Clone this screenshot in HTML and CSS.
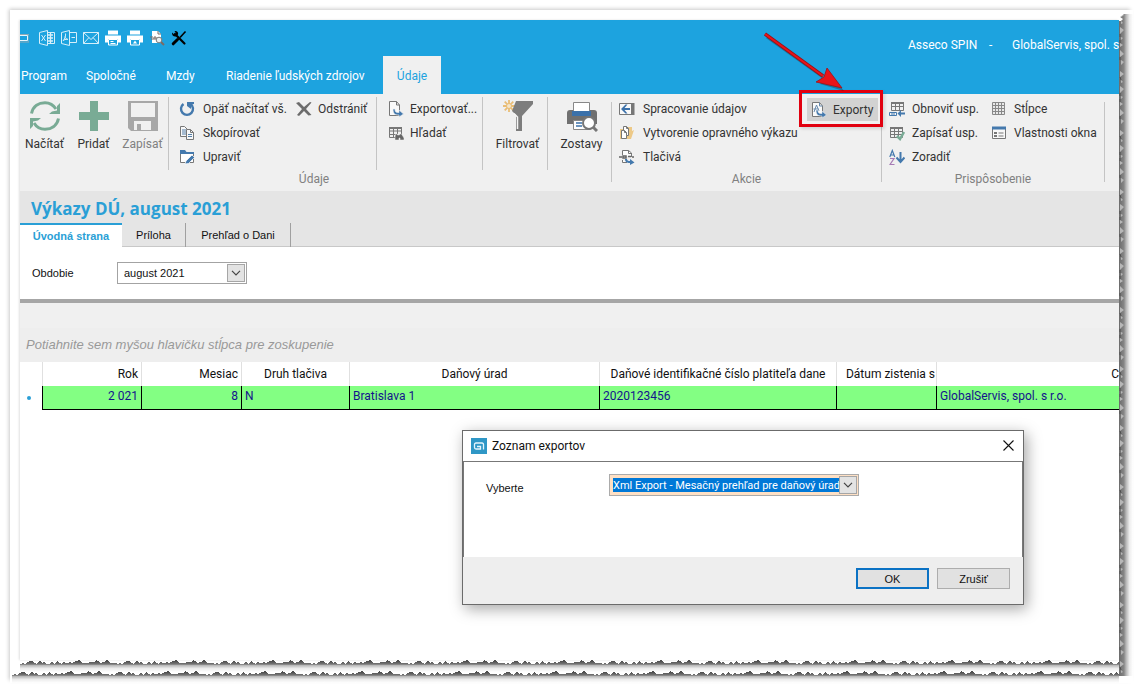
FILE: index.html
```html
<!DOCTYPE html>
<html lang="sk">
<head>
<meta charset="utf-8">
<title>Asseco SPIN</title>
<link rel="stylesheet" href="styles.css">
</head>
<body>
<div class="sheet">
  <div class="app">
    <header class="titlebar">
      <div class="quick">
        <svg class="cut-logo" width="9" height="16" viewBox="0 0 9 16"><path d="M0 4.500h9v7.500H0" fill="none" stroke="#8fa9b5" stroke-width="1"/><path d="M0 5.500h7.500v5H0" fill="none" stroke="#e8f6fc" stroke-width="1"/></svg>
        <button aria-label="Excel"><svg width="16" height="16" viewBox="0 0 16 16" fill="none" stroke="#d6effa"><path d="M.5 2.500l8-2v15l-8-2zM8.500 2.500h7v11h-7M2.500 5l4 6M6.500 5l-4 6"/><path d="M9 5h5M9 8h5M9 11h5M11.500 3v10" stroke-width="1.300"/></svg></button>
        <button aria-label="PDF"><svg width="16" height="16" viewBox="0 0 16 16" fill="none" stroke="#d6effa"><path d="M.5 2.500l8-2v15l-8-2zM8.500 2.500h7v10h-7M2 11c2-2 3-6 2.500-7.500M4 6.500c.5 2 1.500 3 3 3M2.500 10l4-1M10.500 7.500h3.500"/></svg></button>
        <button aria-label="Mail"><svg width="16" height="16" viewBox="0 0 16 16" fill="none" stroke="#d6effa"><path d="M.5 2.500h15v11H.5zM.5 2.500l7.500 7 7.500-7M.5 13.500l5.500-6M15.500 13.500l-5.500-6"/></svg></button>
        <button aria-label="Tlač"><svg width="16" height="16" viewBox="0 0 16 16"><path d="M3 .5h10v4H3zM0 5.500h16v7h-3V9H3v3.500H0z" fill="#fff"/><path d="M3.500 9.500h9v5.500h-9z" fill="#1da3df" stroke="#fff"/><path d="M5.500 11.500h3M5.500 13.500h5" stroke="#fff"/></svg></button>
        <button aria-label="Náhľad tlače"><svg width="16" height="16" viewBox="0 0 16 16"><path d="M3 .5h10v4H3zM0 5.500h16v7h-3V9H3v3.500H0z" fill="#fff"/><path d="M3.500 9.500h9v5.500h-9z" fill="#1da3df" stroke="#fff"/><path d="M8 10.500l2 3H6z" fill="#fff"/></svg></button>
        <button aria-label="Nájsť"><svg width="16" height="16" viewBox="0 0 16 16"><path d="M3 1h6l3 3v9H3z" fill="#fff"/><path d="M9 1v3h3M1 7h3M2 9h3M5 7h2v2H5z" fill="none" stroke="#7b6b65"/><circle cx="10" cy="10" r="2.800" fill="#e9eef0" stroke="#7b7b7b"/><path d="M12 12l3 3" stroke="#7b6b65" stroke-width="2"/></svg></button>
        <button aria-label="Nástroje"><svg width="16" height="16" viewBox="0 0 16 16"><path d="M4 4l9.500 9.500" stroke="#000" stroke-width="2.200" stroke-linecap="round"/><path d="M1 2.500l2.200 2L5 3.500 3.500 1c2.500-.5 4.200 1.500 3.500 3.500L5 6.500C2.500 7 .7 5 1 2.500z" fill="#000"/><path d="M14.500 1.500L9 7.500" stroke="#000" stroke-width="1.600"/><path d="M6.500 9.500l-4.300 4.300" stroke="#000" stroke-width="3" stroke-linecap="round"/></svg></button>
      </div>
      <div class="caption"><span class="product">Asseco SPIN</span><span class="dash">-</span><span class="firm">GlobalServis, spol. s</span></div>
    </header>
    <nav class="menu">
      <a href="#" class="m-program">Program</a><a href="#" class="m-common">Spoločné</a><a href="#" class="m-wages">Mzdy</a><a href="#" class="m-hr">Riadenie ľudských zdrojov</a><a href="#" class="active">Údaje</a>
    </nav>

    <section class="ribbon">
      <div class="group data">
        <div class="tools">
          <div class="bigs">
            <button class="big"><svg width="32" height="32" viewBox="0 0 32 32"><g fill="none" stroke="#79ab95" stroke-width="3"><path d="M2.500 13.500C4 6 10 2.700 16 2.700c4.500 0 8.500 2.300 11 6.300"/><path d="M29.500 18.500c-1.500 7.500-7.500 10.800-13.500 10.800-4.500 0-8.500-2.300-11-6.300"/></g><path d="M31 3v11H20l3-2.500 5-1V6zM1 29V18h11l-3 2.500-5 1V26z" fill="#79ab95"/></svg><span>Načítať</span></button>
            <button class="big"><svg width="32" height="32" viewBox="0 0 32 32"><path d="M12 1h8v11h11v8H20v11h-8V20H1v-8h11z" fill="#79ab95"/></svg><span>Pridať</span></button>
            <button class="big off"><svg width="32" height="32" viewBox="0 0 32 32"><path d="M1 1h30v30H4l-3-3z" fill="#a7a7a7"/><path d="M4 3h24v14H4zM7 21h17v9H7z" fill="#f0f0f0"/><path d="M10 24h4v6h-4z" fill="#a7a7a7"/></svg><span>Zapísať</span></button>
          </div>
          <div class="edit">
            <button class="cmd"><svg width="16" height="16" viewBox="0 0 16 16"><path d="M4.500 3A6 6 0 1 0 11.500 3" fill="none" stroke="#4479ad" stroke-width="2.400"/><path d="M8 1h7v2l-2.500.5L12 8 8 5z" fill="#4479ad"/></svg>Opäť načítať vš.</button>
            <button class="cmd"><svg width="16" height="16" viewBox="0 0 16 16" fill="#f8f8f8" stroke="#777"><path d="M1.500 1.500h4l3 3v7h-7z"/><path d="M3 5h4M3 7h4M3 9h4" stroke="#557fa8"/><path d="M7.500 4.500h4l3 3v7h-7z"/><path d="M11.500 4.500v3h3" fill="none"/><path d="M9 9.500h4M9 11.500h4" stroke="#557fa8"/></svg>Skopírovať</button>
            <button class="cmd"><svg width="16" height="16" viewBox="0 0 16 16"><path d="M1.500 3.500h13v10h-13z" fill="#fff" stroke="#777"/><path d="M1 1h5l1.500 2H15v2H1z" fill="#4479ad"/><path d="M6 15l1-3 6-6 2.500 2.500-6 6z" fill="#4479ad" stroke="#fff" stroke-width=".7"/></svg>Upraviť</button>
          </div>
          <div class="remove">
            <button class="cmd"><svg width="16" height="16" viewBox="0 0 16 16"><path d="M0 2l3-1 5 5 6-5 1.500.5L10 8l5.500 6-3 .5L8 10l-5 5-2-1 5-6z" fill="#6c6c6c"/></svg>Odstrániť</button>
          </div>
          <div class="share">
            <button class="cmd"><svg width="16" height="16" viewBox="0 0 16 16"><path d="M1.500.5h7l3 3.500v10.500h-10z" fill="#fafafa" stroke="#777"/><path d="M8.500.5V4h3" fill="none" stroke="#777"/><path d="M5 8h2c0 3 1 3.500 4 3.500V9l4.500 4-4.500 3v-2C7 14 5 13 5 8z" fill="#4479ad" stroke="#f0f0f0" stroke-width=".6"/></svg>Exportovať...</button>
            <button class="cmd"><svg width="16" height="16" viewBox="0 0 16 16"><path d="M1.500 2.500h12v10h-12zM1 6h12M1 9.500h7M5.500 3v9M9.500 3v6" fill="none" stroke="#777"/><path d="M1 2h13v2H1z" fill="#777"/><path d="M7.500 9h2v1h2V9h2L16 13v2h-4v-2h-1v2H7v-3z" fill="#666" stroke="#f0f0f0" stroke-width=".5"/></svg>Hľadať</button>
          </div>
          <div class="filter">
            <button class="big"><svg width="32" height="32" viewBox="0 0 32 32"><path d="M7 0v12M1 6h12M2.700 1.700l8.600 8.600M11.300 1.700l-8.600 8.600" stroke="#e9bd75" stroke-width="1.800"/><circle cx="7" cy="6" r="2.500" fill="#f5e6ca" stroke="#e9bd75"/><path d="M14 1h17v3l-11 12v15h-6V15l-4-4z" fill="#7d7d7d"/><path d="M12 13.500l3.500 3.500v12" fill="none" stroke="#f5f5f5" stroke-width="1.500"/></svg><span>Filtrovať</span></button>
          </div>
          <div class="reports">
            <button class="big"><svg width="32" height="32" viewBox="0 0 32 32"><path d="M1 13q0-3 3-3h24q3 0 3 3v11H1z" fill="#707070"/><path d="M7.500 2.500h16V14h-16z" fill="#fff" stroke="#888"/><path d="M6 11h19v5H6z" fill="#3b71aa"/><path d="M7.500 20.500h17v9h-17z" fill="#fff" stroke="#888"/><path d="M10 23h6M10 26h6" stroke="#3b71aa" stroke-width="1.400"/><circle cx="23" cy="23" r="6" fill="#fff" stroke="#777" stroke-width="2"/><path d="M27 27l4 4" stroke="#777" stroke-width="3"/></svg><span>Zostavy</span></button>
          </div>
        </div>
        <div class="label">Údaje</div>
      </div>
      <div class="group actions">
        <div class="tools">
          <div class="process">
            <button class="cmd"><svg width="16" height="16" viewBox="0 0 16 16"><path d="M.5 2.500h14v11H.5z" fill="#f9f9f9" stroke="#777"/><path d="M12 2h3.500v12H12z" fill="#777"/><path d="M2 8l4.500-4.500h2L5.500 7H11v2H5.500l3 3.500h-2z" fill="#3b71aa"/></svg>Spracovanie údajov</button>
            <button class="cmd"><svg width="16" height="16" viewBox="0 0 16 16"><path d="M1 4h6l1-2h5v4l2-1-3 9H1z" fill="#edc987"/><path d="M4.500 1.500h3l2 2v7h-2v3h-5v-8h2z" fill="#fff" stroke="#777"/><path d="M4.500 5.500h1l2 2v3M7.500 1.500v2h2M5.500 5.500v2h2" fill="none" stroke="#777"/></svg>Vytvorenie opravného výkazu</button>
            <button class="cmd"><svg width="16" height="16" viewBox="0 0 16 16"><path d="M3.500 6V1.500h6L12.500 4v4M3.500 11v2.500H8" fill="#fff" stroke="#777"/><path d="M9.500 1.500v3h3" fill="none" stroke="#777"/><path d="M0 8h3M4 9V7h3v2zM9 7.500h3M13 8h2" fill="none" stroke="#666" stroke-width="1.500"/><path d="M6 10h2c0 1.500 1 2 3 2v-2l4.500 3.500L11 16v-2c-3 0-5-1-5-4z" fill="#4479ad"/></svg>Tlačivá</button>
          </div>
          <div class="exports">
            <button class="cmd pressed"><svg width="16" height="16" viewBox="0 0 16 16"><path d="M1.500.5h7l3 3.500v10.500h-10z" fill="#fafafa" stroke="#777"/><path d="M8.500.5V4h3M3 10L5.500 3 8 9M2.500 7h5" fill="none" stroke="#6689ad"/><path d="M5 8h2c0 3 1 3.500 4 3.500V9l4.500 4-4.500 3v-2C7 14 5 13 5 8z" fill="#4479ad" stroke="#f0f0f0" stroke-width=".6"/></svg>Exporty</button>
          </div>
        </div>
        <div class="label">Akcie</div>
      </div>
      <div class="group custom">
        <div class="tools">
          <div class="layout">
            <button class="cmd"><svg width="16" height="16" viewBox="0 0 16 16"><path d="M2 1h13v2H2z" fill="#777"/><path d="M2.500 1.500v8h12v-8M2 5.500h13M6.500 2v7M10.500 2v7" fill="none" stroke="#777"/><path d="M.5 11.500h7v3h-7zM2 13h4" fill="#f4f4f4" stroke="#4479ad"/><path d="M8.500 12.500L12 9v2.500h4v2h-4V16z" fill="#4479ad"/></svg>Obnoviť usp.</button>
            <button class="cmd"><svg width="16" height="16" viewBox="0 0 16 16"><path d="M1 2h13v2H1z" fill="#777"/><path d="M1.500 2.500v10h12v-10M1 6.500h13M1 9.500h13M5.500 3v9M9.500 3v9" fill="none" stroke="#777"/><path d="M8 11l3 3 4-7" fill="none" stroke="#79ab95" stroke-width="2.500"/></svg>Zapísať usp.</button>
            <button class="cmd"><svg width="16" height="16" viewBox="0 0 16 16"><path d="M.8 8L3.300 1.500 5.800 8M2 6h3" fill="none" stroke="#4479ad" stroke-width="1.200"/><path d="M1 9.500h4l-4 6h4.500" fill="none" stroke="#a77bb5" stroke-width="1.200"/><path d="M11.500 3v9M7.500 8.500l4 4.500 4-4.500" fill="none" stroke="#4479ad" stroke-width="2"/></svg>Zoradiť</button>
          </div>
          <div class="window">
            <button class="cmd"><svg width="16" height="16" viewBox="0 0 16 16"><path d="M1.500 1.500h12v12h-12z" fill="#e8e8e8"/><path d="M1.500 1.500h12v12h-12zM1 4.500h13M1 7.500h13M1 10.500h13M4.500 1v13M7.500 1v13M10.500 1v13" fill="none" stroke="#888"/></svg>Stĺpce</button>
            <button class="cmd"><svg width="16" height="16" viewBox="0 0 16 16"><path d="M1.500 2.500h13v11h-13z" fill="#f8f8f8" stroke="#777"/><path d="M1 1.500h14v3H1z" fill="#4479ad"/><path d="M3 7h3v2H3zM3 10h3v2H3z" fill="#777"/><path d="M7.500 8h5M7.500 11h5" stroke="#777"/></svg>Vlastnosti okna</button>
          </div>
        </div>
        <div class="label">Prispôsobenie</div>
      </div>
    </section>

    <main class="page">
      <div class="heading">
        <h1>Výkazy DÚ, august 2021</h1>
        <div class="tabs"><button class="current">Úvodná strana</button><button class="tab-two">Príloha</button><button class="tab-three">Prehľad o Dani</button></div>
      </div>
      <div class="period">
        <label for="period">Obdobie</label>
        <div class="combo">
          <select id="period"><option>august 2021</option></select>
          <span class="drop"><svg width="10" height="6" viewBox="0 0 10 6"><path d="M1 .8l4 4 4-4" fill="none" stroke="#444" stroke-width="1.200"/></svg></span>
        </div>
      </div>
      <div class="strip"></div>
      <div class="grouping">Potiahnite sem myšou hlavičku stĺpca pre zoskupenie</div>
      <div class="grid">
        <table>
          <colgroup><col class="c-mark"><col class="c-year"><col class="c-100"><col class="c-kind"><col class="c-office"><col class="c-tax"><col class="c-100"><col></colgroup>
          <thead><tr><th></th><th class="num">Rok</th><th class="num">Mesiac</th><th>Druh tlačiva</th><th>Daňový úrad</th><th>Daňové identifikačné číslo platiteľa dane</th><th class="cut">Dátum zistenia s</th><th class="edge">C</th></tr></thead>
          <tbody><tr><td class="mark"><i class="dot"></i></td><td class="num">2 021</td><td class="num">8</td><td>N</td><td>Bratislava 1</td><td>2020123456</td><td></td><td>GlobalServis, spol. s r.o.</td></tr></tbody>
        </table>
      </div>
    </main>
  </div>

  <svg class="torn-side" width="14" height="100%">
    <defs>
      <linearGradient id="sideShade"><stop offset="0" stop-color="#6c6c6c"/><stop offset=".35" stop-color="#858585"/><stop offset=".5" stop-color="#b5b5b5"/><stop offset=".75" stop-color="#ededed"/><stop offset="1" stop-color="#fff"/></linearGradient>
      <pattern id="side" width="14" height="59" patternUnits="userSpaceOnUse"><path d="M0 0h14v59H0z" fill="url(#sideShade)"/><path d="M1 2l4 3-4 3zM2 11l2 2-2 1zM1 17l4 3-4 4zM2 27l2 1-2 2zM1 33l3 2-3 2zM1 40l4 4-4 3zM2 50l3 2-3 3z" fill="#b7b7b7"/><path d="M1 8l1 3M1 24v3M1 30v3M1 47v3" stroke="#505050" fill="none"/></pattern>
    </defs>
    <rect x="0" y="4" width="14" height="100%" fill="url(#side)"/><path d="M0 0h4l-1 2 2 2-4 3 3 2-2 2H0z" fill="#fff"/>
  </svg>
  <svg class="torn inner" width="100%" height="12">
    <defs>
      <linearGradient id="tearShade" x1="0" y1="0" x2="0" y2="12" gradientUnits="userSpaceOnUse"><stop offset=".1" stop-color="#4d4d4d"/><stop offset=".35" stop-color="#777"/><stop offset=".45" stop-color="#b9b9b9"/><stop offset=".7" stop-color="#ececec"/><stop offset="1" stop-color="#fff"/></linearGradient>
      <pattern id="tear" width="97" height="12" patternUnits="userSpaceOnUse"><path shape-rendering="crispEdges" d="M0 4l3-1 2 1 3-2 2-1 3 0 1 2 3 1 1-2 2-1 2 2 2-1 2 2 3 0 2-2 2 0 1 2 2-1 1-2 3 2 1 1 3-2 1 1 3 0 2-1 1 1 3-1 2-1 3-1 2 2 2 1 5 0 2-1 4 0 2-2 2 1 2 2 3-1 2 0 1-2 2 0 1 2 2 1 6 0V12H0z" fill="url(#tearShade)"/></pattern>
    </defs>
    <rect width="100%" height="12" fill="url(#tear)"/>
  </svg>
  <svg class="torn outer" width="100%" height="12"><rect width="100%" height="12" fill="url(#tear)"/></svg>

  <section class="dialog" role="dialog" aria-labelledby="dlg">
    <header><svg width="16" height="16" viewBox="0 0 16 16"><path d="M0 0h16v16H0z" fill="#2f97c6"/><path d="M12.500 11.500v-5q0-1.500-1.500-1.500H5Q3.500 5 3.500 6.500v3Q3.500 11 5 11h4.500V8.500H6" fill="none" stroke="#e6f5fc" stroke-width="1.300"/></svg><h2 id="dlg">Zoznam exportov</h2><button aria-label="Zavrieť"><svg width="11" height="11" viewBox="0 0 11 11"><path d="M.5.5l10 10M10.500.5l-10 10" stroke="#111" stroke-width="1.100"/></svg></button></header>
    <div class="form">
      <label for="export">Vyberte</label>
      <div class="combo picked">
        <select id="export"><option>Xml Export - Mesačný prehľad pre daňový úrad</option></select>
        <span class="drop"><svg width="10" height="6" viewBox="0 0 10 6"><path d="M1 .8l4 4 4-4" fill="none" stroke="#444" stroke-width="1.200"/></svg></span>
      </div>
    </div>
    <footer><button class="ok">OK</button><button>Zrušiť</button></footer>
  </section>

  <div class="callout"></div>
  <svg class="arrow" width="84" height="64" viewBox="0 0 84 64"><g transform="translate(2 3)" opacity=".25"><path d="M3 4l56 40" stroke="#000" stroke-width="3"/><path d="M80 58L56 51l6-5 3-7z"/></g><path d="M3 4l58 42" stroke="#9a1015" stroke-width="3.500"/><path d="M3 4l58 42" stroke="#e8141a" stroke-width="2"/><path d="M80 58L54 52l8-5 3-9z" fill="#e8141a" stroke="#a01015" stroke-width=".8"/></svg>
</div>
</body>
</html>
```

FILE: styles.css
```css
* { box-sizing: border-box; }
body { margin: 0; background: #fff; color: #111; font: 12px/16px Roboto, "Open Sans", sans-serif; }
button { font: inherit; color: inherit; background: none; border: 0; padding: 0; white-space: nowrap; }
svg { display: block; flex: none; }
h1, h2 { margin: 0; }
a { color: inherit; text-decoration: none; }

.sheet { position: relative; margin: 10px 8px 10px 10px; padding: 10px 0 0 10px; min-height: calc(100vh - 20px); display: grid; grid-template-columns: minmax(0, 1fr) 14px; grid-template-rows: 1fr 11px 12px; background: #fff; box-shadow: -2px -2px 4px -1px rgba(0, 0, 0, .22); }
.app { min-width: 0; overflow: hidden; box-shadow: -1px 0 2px rgba(0, 0, 0, .12); }
.torn-side { grid-column: 2; grid-row: 1 / 4; margin-top: -10px; height: calc(100% + 3px); }
.torn { grid-column: 1; }
.inner { grid-row: 2; }
.outer { grid-row: 3; margin-left: -8px; width: calc(100% + 8px); }

.titlebar { height: 36px; display: flex; justify-content: space-between; background: #1da3df; color: #fff; }
.quick { display: flex; align-items: center; gap: 6px; }
.cut-logo { margin-right: 4px; }
.caption { display: flex; align-items: center; padding-top: 14px; white-space: nowrap; }
.product { width: 81px; }
.dash { width: 23px; }
.firm { width: 107px; }
.menu { height: 38px; display: flex; background: #1da3df; color: #fff; line-height: 40px; white-space: nowrap; }
.m-program { width: 66px; padding-left: 1px; }
.m-common { width: 80px; }
.m-wages { width: 60px; }
.m-hr { width: 157px; }
.active { width: 58px; text-align: center; background: #f0f0f0; color: #1da3df; }

.ribbon { display: flex; height: 97px; background: #f0f0f0; color: #333; padding-top: 3px; }
.group { display: flex; flex-direction: column; flex: none; }
.tools { display: flex; flex: none; height: 73px; }
.tools > div { flex: none; }
.label { text-align: center; line-height: 18px; color: #808080; }
.data { width: 592px; }
.data .label { padding-right: 4px; }
.actions { width: 271px; margin-left: -1px; border-left: 1px solid #c4c4c4; }
.custom { width: 223px; }
.actions, .custom { border-right: 1px solid #c4c4c4; margin-top: 5px; margin-bottom: 9px; }
.actions .tools, .custom .tools { margin-top: -5px; }
.bigs { display: flex; width: 149px; border-right: 1px solid #c4c4c4; }
.big { width: 49px; padding-top: 3px; display: flex; flex-direction: column; align-items: center; gap: 4px; align-self: flex-start; }
.off { color: #808080; }
.cmd { display: flex; align-items: center; gap: 8px; height: 24px; }
.edit { width: 118px; padding-left: 10px; }
.remove { width: 90px; padding-left: 9px; border-right: 1px solid #c4c4c4; }
.remove .cmd { gap: 6px; }
.share { width: 106px; padding-left: 11px; border-right: 1px solid #c4c4c4; }
.share .cmd { gap: 6px; }
.filter { width: 65px; padding-left: 10px; border-right: 1px solid #c4c4c4; }
.reports { width: 64px; padding-left: 9px; }
.process { width: 195px; padding-left: 7px; }
.pressed { height: 23px; margin-top: 1px; padding: 0 5px 0 4px; gap: 6px; background: #d2d2d2; }
.layout { width: 109px; padding-left: 7px; }
.layout .cmd { gap: 7px; }
.window .cmd { gap: 7px; }

.heading { background: #e5e5e5; border-bottom: 1px solid #c8c8c8; }
h1 { height: 32px; padding: 7px 11px 0; font: 700 17px/22px "Open Sans", "Noto Sans", sans-serif; color: #2a9fd6; white-space: nowrap; }
.tabs { display: flex; height: 24px; margin-bottom: -1px; font: 11px/24px "Liberation Sans", Arial, sans-serif; }
.tabs button { border-right: 1px solid #a0a0a0; }
.tabs .current { width: 102px; background: #fff; border-right: 0; border-top: 2px solid #2a9fd6; color: #2a9fd6; font-weight: 700; line-height: 20px; }
.tabs .tab-two { width: 64px; }
.tabs .tab-three { width: 105px; }
.period { display: flex; align-items: center; height: 52px; padding-left: 12px; font: 11px/16px "Liberation Sans", Arial, sans-serif; }
.period label { width: 85px; }
.combo { display: flex; width: 130px; height: 22px; padding: 1px; border: 1px solid #a3a3a3; background: #fff; }
.combo select { appearance: none; flex: 1; min-width: 0; border: 0; padding: 0 5px; background: transparent; color: #111; font: 11px/16px "Liberation Sans", Arial, sans-serif; }
.drop { width: 18px; display: grid; place-items: center; border: 1px solid #a6a6a6; background: #e3e3e3; }
.strip { height: 29px; border-top: 4px solid #a6a6a6; background: #f0f0f0; }
.grouping { height: 34px; padding-left: 6px; line-height: 34px; background: #eee; color: #999; font-family: "Liberation Sans", Arial, sans-serif; font-size: 13px; font-style: italic; }
.grid { overflow: hidden; }
table { width: 100%; table-layout: fixed; border-collapse: separate; border-spacing: 0; }
.c-mark { width: 23px; }
.c-year { width: 99px; }
.c-100 { width: 100px; }
.c-kind { width: 108px; }
.c-office { width: 250px; }
.c-tax { width: 237px; }
th, td { height: 24px; padding: 0 3px; white-space: nowrap; overflow: hidden; }
th { font-weight: 400; border-right: 1px solid #e0e0e0; }
td { padding-bottom: 3px; background: #83ff83; color: #14148c; border-right: 1px solid #000; border-bottom: 1px solid #000; }
th:last-child, td:last-child { border-right: 0; }
.num { text-align: right; }
th.cut { text-align: right; padding: 0 1px 0 0; }
th.edge { text-align: right; padding: 0; }
td.mark { background: #fff; border-bottom: 0; padding: 0 7px; }
.dot { display: block; width: 4px; height: 4px; border-radius: 50%; background: #2a9fd6; }

.dialog { position: absolute; left: 452px; top: 420px; width: 562px; border: 1px solid #6b6b6b; background: #fff; box-shadow: 3px 4px 14px rgba(0, 0, 0, .35); font: 11px/16px "Liberation Sans", Arial, sans-serif; }
.dialog header { display: flex; align-items: center; height: 31px; padding: 0 9px 1px 8px; border-bottom: 1px solid #777; }
.dialog h2 { flex: 1; padding-left: 5px; font: 400 12px/16px Roboto, "Open Sans", sans-serif; }
.form { display: flex; height: 95px; padding: 12px 21px; border-right: 1px solid #777; border-left: 1px solid #777; }
.form label { width: 124px; padding: 6px 0 0 1px; }
.picked { width: 250px; background: #ffe0c4; border-color: #ababab; }
.picked select { color: #fff; padding: 1px 0 0 2px; font-family: Roboto, sans-serif; background: linear-gradient(#0078d7, #0078d7) right center / calc(100% - 2px) 14px no-repeat; }
.dialog footer { display: flex; justify-content: flex-end; gap: 8px; height: 47px; padding: 11px 13px 15px; background: #eee; }
.dialog footer button { width: 73px; background: #e1e1e1; border: 1px solid #adadad; }
.dialog footer .ok { border: 2px solid #0b72c4; }

.callout { position: absolute; left: 789px; top: 80px; width: 84px; height: 37px; border: 3px solid #e1000f; box-shadow: 2px 2px 3px rgba(0, 0, 0, .12); pointer-events: none; }
.arrow { position: absolute; left: 752px; top: 20px; }
```
